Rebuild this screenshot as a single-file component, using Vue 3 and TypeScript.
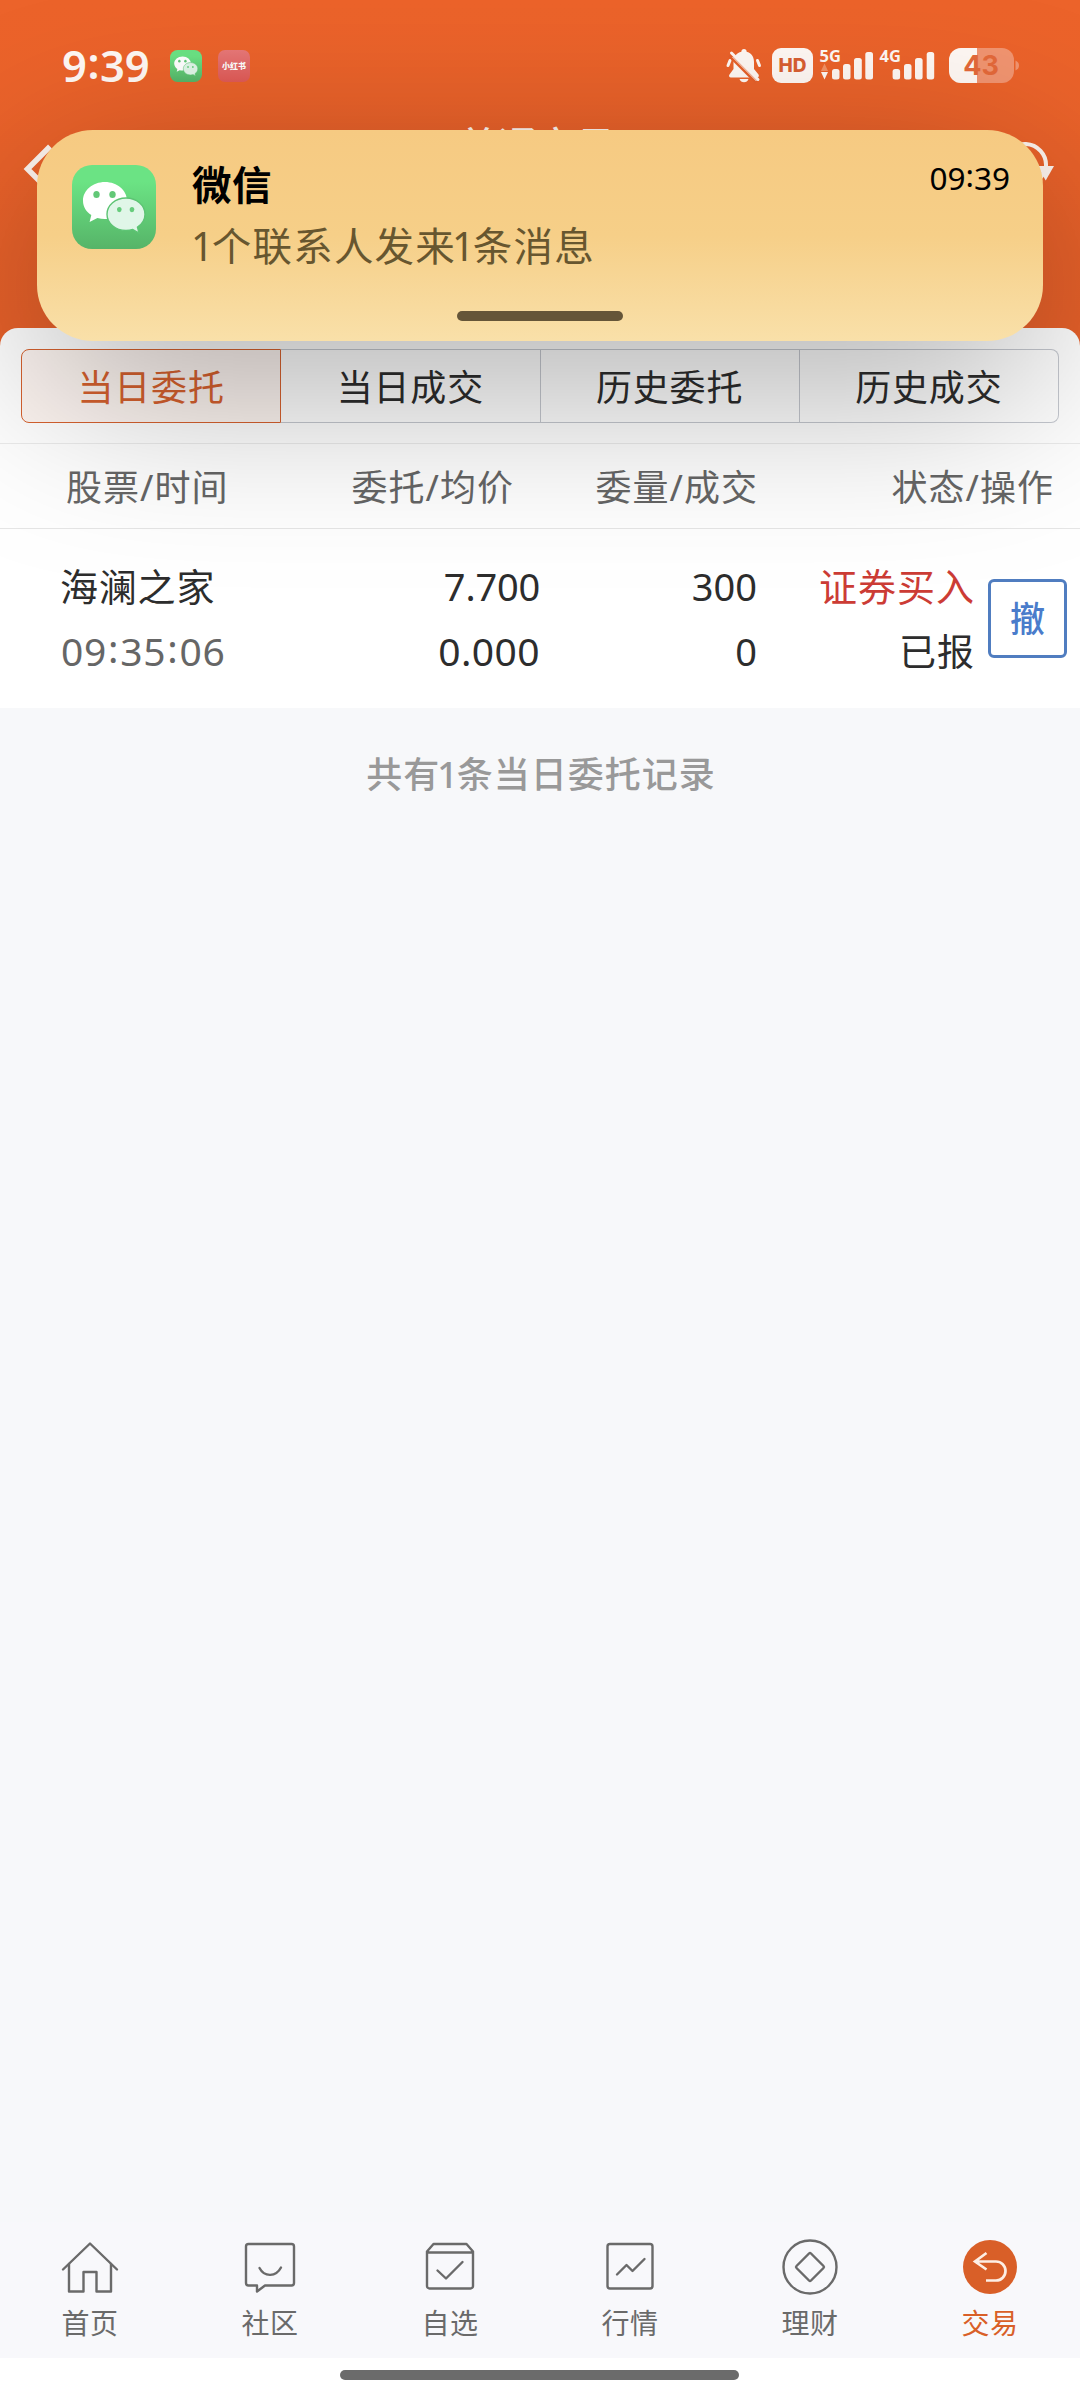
<script setup lang="ts">
interface Cell {
  text: string
}

const tabs: string[] = ['当日委托', '当日成交', '历史委托', '历史成交']
const activeTab = '当日委托'

const columns: Cell[] = [
  { text: '股票/时间' },
  { text: '委托/均价' },
  { text: '委量/成交' },
  { text: '状态/操作' },
]

const order = {
  name: '海澜之家',
  time: ['09', '35', '06'],
  price: '7.700',
  average: '0.000',
  amount: '300',
  filled: '0',
  side: '证券买入',
  status: '已报',
}

const navItems = [
  { id: 'home', label: '首页' },
  { id: 'community', label: '社区' },
  { id: 'favorites', label: '自选' },
  { id: 'market', label: '行情' },
  { id: 'wealth', label: '理财' },
  { id: 'trade', label: '交易' },
]
</script>

<template>
  <div class="screen">
    <svg class="defs" width="0" height="0" aria-hidden="true">
      <defs>
        <linearGradient id="wxBg" x1="0" y1="0" x2="0" y2="1">
          <stop offset="0.2" stop-color="#6be384" />
          <stop offset="1" stop-color="#56b468" />
        </linearGradient>
        <symbol id="wechat" viewBox="0 0 84 84">
          <rect width="84" height="84" rx="20" fill="url(#wxBg)" />
          <path
            fill="#fff"
            d="M33 17c-12.200 0-22 8.300-22 18.700 0 5.900 3.200 11 8.300 14.400l-1.700 7 7.800-4c2.400.7 5 1 7.600 1 12.200 0 22-8 22-18.400S45.200 17 33 17z"
          />
          <ellipse cx="24.500" cy="29.500" rx="3.200" ry="3.600" fill="#62c877" />
          <ellipse cx="40.500" cy="29.500" rx="3.200" ry="3.600" fill="#62c877" />
          <path
            fill="#e0f6e8"
            stroke="#5dc474"
            stroke-width="1.400"
            d="M54 33c-10.600 0-19 7.200-19 16.300s8.400 16.200 19 16.200c2.400 0 4.600-.3 6.700-1l6.300 3.500-1.500-5.800c4.500-3 7.500-7.600 7.500-12.900C73 40.200 64.600 33 54 33z"
          />
          <ellipse cx="47.300" cy="44.600" rx="2.300" ry="2.600" fill="#66cc7c" />
          <ellipse cx="60" cy="44.600" rx="2.300" ry="2.600" fill="#66cc7c" />
        </symbol>
      </defs>
    </svg>

    <div class="top">
      <header class="status-bar">
        <span class="clock">9<i class="colon">:</i>39</span>
        <svg class="app-mini" viewBox="0 0 84 84"><use href="#wechat" /></svg>
        <span class="app-mini red">小红书</span>
        <span class="spacer"></span>
        <svg class="indicators" viewBox="724 44 300 44" width="300" height="44">
          <g fill="#fff8f4">
            <circle cx="744" cy="51.500" r="2.600" />
            <path
              d="M744 51.500c6.500 0 10 4.600 10 10.500v7l4.500 5.500c.8 1.500.3 3-1.500 3h-26c-1.800 0-2.600-1.500-1.500-3l4-5.500v-7c0-5.900 4-10.500 10.500-10.500z"
            />
            <path d="M739.500 79h9c-.8 2.200-2.400 3.300-4.500 3.300s-3.700-1.100-4.500-3.300z" />
          </g>
          <path d="M728 65.500l2-5M759.500 65.500l-2-5" stroke="#fff8f4" stroke-width="3" stroke-linecap="round" />
          <path d="M730 54.500l27 27" stroke="#e7602a" stroke-width="5.500" />
          <path d="M731.500 53l26.500 26.500" stroke="#fff8f4" stroke-width="3" stroke-linecap="round" />
          <path d="M732.500 57l24 24" stroke="#fff8f4" stroke-width="1" />

          <rect x="772" y="48" width="41" height="35" rx="9" fill="#fff8f4" />
          <text x="792.500" y="72.200" class="hd">HD</text>

          <text x="819.500" y="62" class="net">5G</text>
          <path d="M824.500 63.500l3.500 7.500h-7z" fill="#f39266" />
          <path d="M824.500 79.500l3.500-7.500h-7z" fill="#fff8f4" />
          <g fill="#fff8f4">
            <rect x="832" y="69" width="7.500" height="10.500" rx="2.500" />
            <rect x="843" y="64" width="7.500" height="15.500" rx="2.500" />
            <rect x="854" y="58" width="7.800" height="21.500" rx="2.500" />
            <rect x="865.300" y="52" width="7.700" height="27.500" rx="2.500" />
            <rect x="892.600" y="69" width="7.500" height="10.500" rx="2.500" />
            <rect x="904" y="64" width="7.500" height="15.500" rx="2.500" />
            <rect x="915" y="58" width="7.600" height="21.500" rx="2.500" />
            <rect x="926.700" y="52" width="7.500" height="27.500" rx="2.500" />
          </g>
          <text x="879.500" y="62" class="net">4G</text>

          <clipPath id="charge"><rect x="948" y="48" width="29" height="35" /></clipPath>
          <rect x="949" y="48" width="65" height="35" rx="12" fill="#f19470" />
          <rect x="949" y="48" width="65" height="35" rx="12" fill="#fff8f4" clip-path="url(#charge)" />
          <path d="M1015.500 60.500c2.400 1.200 3.500 2.700 3.500 5s-1.100 3.800-3.500 5z" fill="#f19470" />
          <text x="981" y="75.200" class="battery">43</text>
        </svg>
      </header>

      <div class="title-bar">
        <svg class="back" viewBox="0 0 34 52" width="34" height="52">
          <path d="M30 3.500L7.500 26l22.500 22.500" fill="none" stroke="#fff6f0" stroke-width="5.500" />
        </svg>
        <h1>普通交易</h1>
        <svg class="refresh" viewBox="0 0 60 60" width="60" height="60">
          <path
            d="M10 28a21 21 0 0 1 42 2M50 36a21 21 0 0 1-38 2"
            fill="none"
            stroke="#fff6f0"
            stroke-width="4"
          />
          <path d="M43.500 30H60L51.700 44.500z" fill="#fff6f0" />
        </svg>
      </div>

      <main class="panel">
        <nav class="tabs">
          <span v-for="tab in tabs" :key="tab" class="tab" :class="{ active: tab === activeTab }">{{ tab }}</span>
        </nav>

        <div class="head">
          <span v-for="col in columns" :key="col.text">{{ col.text }}</span>
        </div>

        <div class="row">
          <div class="col stock">
            <span>{{ order.name }}</span>
            <span class="time">
              <template v-for="(part, i) in order.time" :key="i"><i v-if="i" class="colon">:</i>{{ part }}</template>
            </span>
          </div>
          <div class="col price">
            <span>{{ order.price }}</span>
            <span class="avg">{{ order.average }}</span>
          </div>
          <div class="col amount">
            <span>{{ order.amount }}</span>
            <span>{{ order.filled }}</span>
          </div>
          <div class="col state">
            <span class="side">{{ order.side }}</span>
            <span class="reported">{{ order.status }}</span>
          </div>
          <button class="cancel" type="button">撤</button>
        </div>
      </main>
    </div>

    <p class="summary">共有<b class="one">1</b>条当日委托记录</p>

    <footer class="bottom-nav">
      <div v-for="item in navItems" :key="item.id" class="nav-item" :class="{ current: item.id === 'trade' }">
        <svg
          viewBox="0 0 60 56"
          width="60"
          height="56"
          fill="none"
          stroke="#6a6a6a"
          stroke-width="2.400"
          stroke-linecap="round"
          stroke-linejoin="round"
        >
          <template v-if="item.id === 'home'">
            <path d="M3 30.500L30 4.500l27 26" />
            <path d="M9 25v27.500h14.500V33h13v19.500H51V25" />
          </template>
          <template v-else-if="item.id === 'community'">
            <path d="M8.500 5h43a2.500 2.500 0 0 1 2.500 2.500v36.500a2.500 2.500 0 0 1-2.500 2.500H25l-8 6v-6H8.500a2.500 2.500 0 0 1-2.500-2.500V7.500A2.500 2.500 0 0 1 8.500 5z" />
            <path d="M19.500 29c5 9.500 16.500 9 21.500-0.500" />
          </template>
          <template v-else-if="item.id === 'favorites'">
            <path d="M7 12.500L13.500 5h33l6.500 7.500V47a2.500 2.500 0 0 1-2.500 2.500h-41A2.500 2.500 0 0 1 7 47zM7 13.500h46" />
            <path d="M17.500 31.500l8.500 8L42.500 23" />
          </template>
          <template v-else-if="item.id === 'market'">
            <rect x="7.500" y="5" width="45" height="44.500" rx="2.500" />
            <path d="M17 35.500l9.500-9.500 6 6L44.500 20" />
          </template>
          <template v-else-if="item.id === 'wealth'">
            <circle cx="30" cy="28" r="26.500" />
            <path d="M31 14.500l12.500 12.500q1 1 0 2L31 41.500q-1 1-2 0L16.500 29q-1-1 0-2L29 14.500q1-1 2 0z" />
          </template>
          <template v-else>
            <circle cx="30" cy="28" r="27" fill="#d95f28" stroke="none" />
            <path
              d="M26.500 14L15 22.500l11.500 8M15.500 22.500h20.500a9.500 9.500 0 0 1 0 19H26"
              stroke="#fdeee4"
              stroke-width="2.700"
              stroke-linecap="butt"
              stroke-linejoin="miter"
            />
          </template>
        </svg>
        <span>{{ item.label }}</span>
      </div>
    </footer>
    <div class="gesture"><span></span></div>

    <div class="notification-shade"></div>
    <section class="notification">
      <svg class="app-icon" viewBox="0 0 84 84"><use href="#wechat" /></svg>
      <div class="message">
        <strong>微信</strong>
        <p><b class="one">1</b>个联系人发来<b class="one">1</b>条消息</p>
      </div>
      <time>09<i class="colon">:</i>39</time>
      <span class="handle"></span>
    </section>
  </div>
</template>

<style>
body {
  margin: 0;
}
</style>

<style scoped>
.screen {
  position: relative;
  display: flex;
  flex-direction: column;
  width: 1080px;
  height: 2400px;
  overflow: hidden;
  background: #f7f8fa;
  color: #2d2d2d;
  font-family: "Noto Sans", "Noto Sans CJK SC", sans-serif;
  font-size: 36px;
}

.defs {
  position: absolute;
}

.top {
  background: linear-gradient(#ec632a, #e8612a 328px);
}

.status-bar {
  display: flex;
  align-items: center;
  height: 44px;
  padding: 44px 56px 0 62px;
}

.clock {
  width: 108px;
  padding-bottom: 2px;
  color: #fff8f4;
  font-size: 43.500px;
  font-weight: 600;
  line-height: 42px;
  white-space: nowrap;
}

.colon {
  position: relative;
  top: -0.080em;
  font-style: normal;
}

.clock .colon {
  margin: 0 0.500px;
}

.app-mini {
  width: 32px;
  height: 32px;
  margin-right: 16px;
}

.app-mini.red {
  border-radius: 7px;
  background: linear-gradient(#e87878, #e05a56);
  color: #fff;
  font-size: 8px;
  font-weight: 900;
  line-height: 32px;
  text-align: center;
}

.spacer {
  flex: 1;
}

.hd {
  fill: #d95f32;
  font: 800 19px Inter, sans-serif;
  text-anchor: middle;
}

.net {
  fill: #fff8f4;
  font: 700 16.500px "Noto Sans", sans-serif;
}

.battery {
  fill: #e4693a;
  font: 700 27px Inter, sans-serif;
  text-anchor: middle;
}

.title-bar {
  display: flex;
  align-items: flex-start;
  justify-content: space-between;
  height: 206px;
  padding: 34px 20px 0;
}

.back {
  margin-top: 21px;
}

h1 {
  margin: -3px 0 0;
  color: #fff6f0;
  font-size: 39px;
  font-weight: 500;
  line-height: 52px;
}

.refresh {
  margin: 14px 6px 0 -26px;
}

.panel {
  height: 359px;
  padding-top: 21px;
  border-radius: 18px 18px 0 0;
  background: #fff;
}

.tabs {
  display: flex;
  height: 74px;
  margin: 0 21px 20px;
}

.tab {
  flex: 1;
  box-sizing: border-box;
  border: 1px solid #c6c9d0;
  border-left: 0;
  font-size: 36px;
  letter-spacing: 0.800px;
  line-height: 76px;
  text-align: center;
}

.tab:last-child {
  border-radius: 0 8px 8px 0;
}

.tab.active {
  border: 1px solid #d8622f;
  border-radius: 8px 0 0 8px;
  background: rgba(235, 98, 42, 0.060);
  color: #d8622f;
}

.head {
  display: flex;
  height: 84px;
  padding-left: 66px;
  border-top: 1px solid #ececec;
  border-bottom: 1px solid #e6e6e6;
  color: #666;
  letter-spacing: 1px;
  line-height: 87px;
  white-space: nowrap;
}

.head span {
  width: 234px;
}

.head span:nth-child(n + 2) {
  width: 214px;
  text-align: right;
}

.head span:nth-child(3) {
  width: 244px;
}

.head span:nth-child(4) {
  width: 296px;
}

.row {
  display: flex;
  padding: 25px 13px 0 60px;
}

.col {
  display: flex;
  flex-direction: column;
  font-size: 38px;
  line-height: 65px;
  text-align: right;
  white-space: nowrap;
}

.stock {
  width: 230px;
  letter-spacing: 0.800px;
  text-align: left;
}

.stock .time {
  padding-left: 1px;
  color: #666;
  font-size: 39px;
  letter-spacing: 0.600px;
  line-height: 63px;
}

.time .colon {
  margin: 0 1.200px;
}

.price {
  width: 250px;
}

.price span:first-child {
  letter-spacing: -0.200px;
}

.avg {
  font-size: 39px;
  letter-spacing: 0.400px;
  line-height: 63px;
}

.amount {
  width: 217px;
}

.state {
  width: 218px;
  letter-spacing: 1px;
}

.side {
  color: #cc3c35;
}

.reported {
  font-size: 37px;
}

.cancel {
  box-sizing: border-box;
  width: 79px;
  height: 79px;
  margin: 25px 0 0 13px;
  padding: 0;
  border: 3px solid #507dc0;
  border-radius: 6px;
  background: #fff;
  color: #4a7ccb;
  font: 500 35px/73px "Noto Sans", "Noto Sans CJK SC", sans-serif;
}

.summary {
  flex: 1;
  margin: 0;
  padding: 41px 0 0 2px;
  color: #999;
  font-weight: 500;
  letter-spacing: 1px;
  line-height: 52px;
  text-align: center;
}

.one {
  margin: 0 -2px 0 -3px;
  font-weight: inherit;
}

.bottom-nav {
  display: flex;
  height: 119px;
  padding-top: 17px;
  background: #f8f8fb;
}

.nav-item {
  display: flex;
  flex: 1;
  flex-direction: column;
  align-items: center;
  color: #6a6a6a;
  font-size: 28px;
  letter-spacing: 0.500px;
  line-height: 56px;
}

.nav-item.current {
  color: #d95f28;
}

.gesture {
  display: flex;
  justify-content: center;
  height: 42px;
  background: #fff;
}

.gesture span {
  width: 399px;
  height: 10px;
  margin: 12px 1px 0 0;
  border-radius: 5px;
  background: #6b6b6b;
}

.notification-shade {
  position: absolute;
  top: 180px;
  left: 37px;
  width: 1006px;
  height: 211px;
  border-radius: 60px;
  background: rgba(0, 0, 0, 0.310);
  filter: blur(90px);
}

.notification {
  position: absolute;
  top: 130px;
  left: 37px;
  display: flex;
  box-sizing: border-box;
  width: 1006px;
  height: 211px;
  padding: 35px 33px 0 35px;
  border-radius: 56px;
  background: linear-gradient(#f6ca82, #f6cf88 50%, #f9e0a9);
}

.app-icon {
  width: 84px;
  height: 84px;
}

.message {
  flex: 1;
  margin-left: 36px;
}

.message strong {
  display: block;
  color: #000;
  font-size: 39.500px;
  font-weight: 700;
  letter-spacing: 0.500px;
  line-height: 40px;
}

.message p {
  margin: 12px 0 0 3px;
  color: #67562f;
  font-size: 39.500px;
  letter-spacing: 1.200px;
  line-height: 59px;
}

.message .one {
  margin: 0 -3px 0 -4px;
}

time {
  color: #000;
  font-size: 31.500px;
  line-height: 25px;
}

.handle {
  position: absolute;
  bottom: 20px;
  left: 420px;
  width: 166px;
  height: 10px;
  border-radius: 5px;
  background: #655538;
}
</style>
